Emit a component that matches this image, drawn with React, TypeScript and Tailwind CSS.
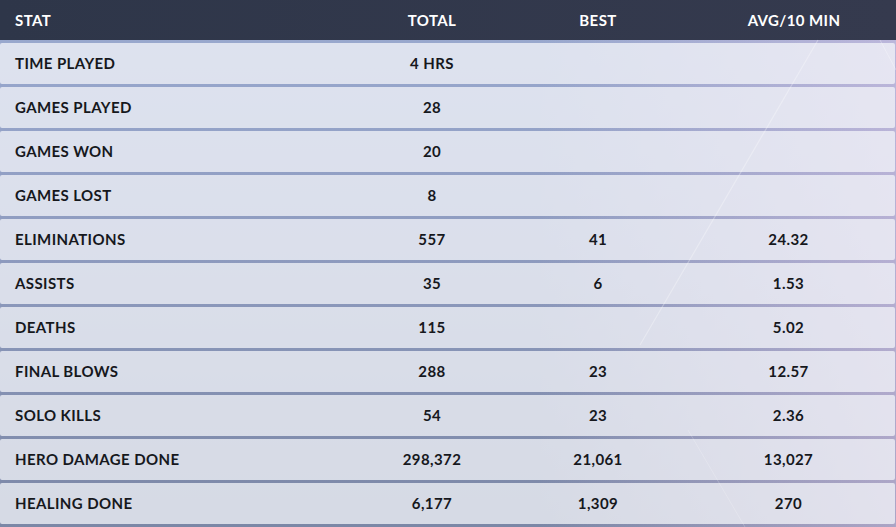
import React from "react";

type Row = { stat: string; total: string; best?: string; avg?: string };

const rows: Row[] = [
  { stat: "Time Played", total: "4 hrs" },
  { stat: "Games Played", total: "28" },
  { stat: "Games Won", total: "20" },
  { stat: "Games Lost", total: "8" },
  { stat: "Eliminations", total: "557", best: "41", avg: "24.32" },
  { stat: "Assists", total: "35", best: "6", avg: "1.53" },
  { stat: "Deaths", total: "115", avg: "5.02" },
  { stat: "Final Blows", total: "288", best: "23", avg: "12.57" },
  { stat: "Solo Kills", total: "54", best: "23", avg: "2.36" },
  { stat: "Hero Damage Done", total: "298,372", best: "21,061", avg: "13,027" },
  { stat: "Healing Done", total: "6,177", best: "1,309", avg: "270" },
];

const cols = "grid grid-cols-[350px_164px_168px_1fr] items-center";

export default function App() {
  return (
    <div className="relative w-[896px] h-[527px] overflow-hidden font-['Lato','Noto_Sans',sans-serif] uppercase tracking-[0.4px] bg-[linear-gradient(180deg,#9aaad0_0%,#8f9cc0_45%,#7b87a6_100%)]">
      <div className="absolute inset-0 bg-[linear-gradient(90deg,transparent_60%,rgba(230,200,235,0.45)_100%)]" />

      <div className="relative flex flex-col">
        <div className={`${cols} h-10 bg-[linear-gradient(90deg,#2e3649,#353a4e)] text-white text-[15px] font-bold`}>
          <div className="pl-[15px]">Stat</div>
          <div className="text-center">Total</div>
          <div className="text-center">Best</div>
          <div className="text-center pl-[10px]">Avg/10 Min</div>
        </div>

        <div className="flex flex-col gap-[3px] pt-[3px]">
          {rows.map((r) => (
            <div
              key={r.stat}
              className={`${cols} h-[41px] mr-px rounded-[2px] bg-[#f4f5fa]/75 text-[#16181d] text-[15px] font-bold`}
            >
              <div className="pl-[15px]">{r.stat}</div>
              <div className="text-center">{r.total}</div>
              <div className="text-center">{r.best ?? ""}</div>
              <div className="text-center">{r.avg ?? ""}</div>
            </div>
          ))}
        </div>
      </div>

      {/* faint light streaks over the table */}
      <svg className="pointer-events-none absolute inset-0" width="896" height="527">
        <line x1="818" y1="40" x2="640" y2="345" stroke="white" strokeOpacity="0.3" strokeWidth="1.2" />
        <line x1="688" y1="430" x2="745" y2="527" stroke="white" strokeOpacity="0.2" strokeWidth="1" />
        <line x1="880" y1="40" x2="896" y2="70" stroke="white" strokeOpacity="0.3" strokeWidth="1" />
      </svg>
    </div>
  );
}
